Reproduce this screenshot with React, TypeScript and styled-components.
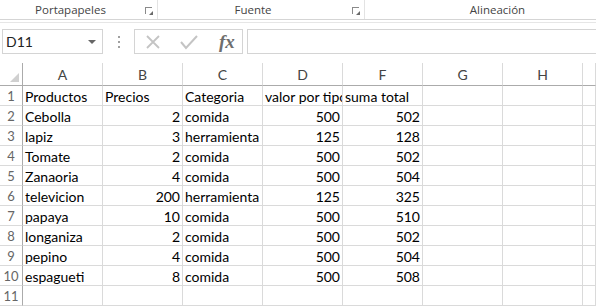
import { Fragment } from 'react';
import styled, { createGlobalStyle } from 'styled-components';

const GlobalStyle = createGlobalStyle`
    html, body {
        margin: 0;
        padding: 0;
        background: #ffffff;
    }
    body {
        font-family: Lato, "Liberation Sans", sans-serif;
        overflow: hidden;
    }
`;

const Wrap = styled.div`
    width: 596px;
    height: 306px;
    overflow: hidden;
    background: #ffffff;
`;

// ribbon group labels
const RibbonFooter = styled.div`
    display: flex;
    height: 19px;
    border-bottom: 1px solid #d5d5d5;
`;
const RibbonGroup = styled.div<{ $width: number; $launcher?: boolean }>`
    position: relative;
    flex: 0 0 ${(props) => props.$width}px;
    display: flex;
    justify-content: center;
    align-items: center;
    padding-right: ${(props) => (props.$launcher ? '16px' : '0')};
    border-right: 1px solid #e3e3e3;
    box-sizing: border-box;
    font-family: "Open Sans", sans-serif;
    font-size: 11.5px;
    color: #444444;
`;
const Launcher = styled.span`
    position: absolute;
    right: 5px;
    top: 7px;
    width: 7px;
    height: 7px;
    border-left: 1px solid #8a8a8a;
    border-top: 1px solid #8a8a8a;
    box-sizing: border-box;
    &::after {
        content: '';
        position: absolute;
        right: -1px;
        bottom: -1px;
        width: 0;
        height: 0;
        border-left: 4px solid transparent;
        border-bottom: 4px solid #6a6a6a;
    }
`;
const RibbonLine = styled.div`
    margin-top: 2px;
    height: 0;
    border-top: 1px solid #e6e6e6;
`;

// formula bar
const FormulaBar = styled.div`
    display: flex;
    align-items: stretch;
    height: 25px;
    margin-top: 6px;
    padding-left: 2px;
`;
const NameBox = styled.div`
    width: 101px;
    box-sizing: border-box;
    border: 1px solid #d4d4d4;
    display: flex;
    align-items: center;
    justify-content: space-between;
    padding: 0 6px 0 3px;
    font-size: 14px;
    color: #222222;
`;
const DropArrow = styled.span`
    width: 0;
    height: 0;
    border-left: 4px solid transparent;
    border-right: 4px solid transparent;
    border-top: 4px solid #666666;
`;
const Dots = styled.div`
    width: 31px;
    display: flex;
    flex-direction: column;
    justify-content: center;
    align-items: center;
    gap: 3px;
    span {
        width: 2px;
        height: 2px;
        background: #a0a0a0;
    }
`;
const ButtonBox = styled.div`
    width: 109px;
    box-sizing: border-box;
    border: 1px solid #d4d4d4;
    display: flex;
    align-items: center;
    padding-left: 10px;
    gap: 19px;
`;
const Fx = styled.span`
    font-family: "Liberation Serif", serif;
    font-style: italic;
    font-weight: bold;
    font-size: 19px;
    color: #6e6e6e;
    margin-left: 2px;
`;
const FormulaInput = styled.div`
    flex: 1;
    margin-left: 4px;
    border: 1px solid #d4d4d4;
    border-right: 0;
`;

// sheet
const Sheet = styled.div`
    margin-top: 9px;
    display: grid;
    grid-template-columns: 23px repeat(7, 80px) 1fr;
    grid-auto-rows: 20px;
    grid-template-rows: 23px;
`;
const Corner = styled.div`
    position: relative;
    border-right: 1px solid #ababab;
    border-bottom: 1px solid #ababab;
    &::after {
        content: '';
        position: absolute;
        right: 3px;
        bottom: 3px;
        width: 0;
        height: 0;
        border-left: 9px solid transparent;
        border-bottom: 9px solid #d0d0d0;
    }
`;
const ColHead = styled.div`
    display: flex;
    align-items: center;
    justify-content: center;
    border-right: 1px solid #dadada;
    border-bottom: 1px solid #ababab;
    font-size: 14px;
    color: #444444;
`;
const RowHead = styled.div`
    display: flex;
    align-items: center;
    justify-content: center;
    border-right: 1px solid #ababab;
    border-bottom: 1px solid #dadada;
    font-size: 13px;
    color: #666666;
`;
const Cell = styled.div<{ $num?: boolean }>`
    box-sizing: border-box;
    padding: 1px 2px 0 2px;
    border-right: 1px solid #dadada;
    border-bottom: 1px solid #dadada;
    font-size: 14px;
    line-height: 19px;
    color: #000000;
    white-space: nowrap;
    overflow: hidden;
    text-align: ${(props) => (props.$num ? 'right' : 'left')};
`;

const columns = ['A', 'B', 'C', 'D', 'F', 'G', 'H', ''];

const data: (string | number)[][] = [
    ['Productos', 'Precios', 'Categoria', 'valor por tipo', 'suma total'],
    ['Cebolla', 2, 'comida', 500, 502],
    ['lapiz', 3, 'herramienta', 125, 128],
    ['Tomate', 2, 'comida', 500, 502],
    ['Zanaoria', 4, 'comida', 500, 504],
    ['televicion', 200, 'herramienta', 125, 325],
    ['papaya', 10, 'comida', 500, 510],
    ['longaniza', 2, 'comida', 500, 502],
    ['pepino', 4, 'comida', 500, 504],
    ['espagueti', 8, 'comida', 500, 508],
    [],
];

const CancelIcon = () => (
    <svg width="16" height="16" viewBox="0 0 16 16">
        <path d="M2 2 L14 14 M14 2 L2 14" stroke="#c4c4c4" strokeWidth="1.8" fill="none" />
    </svg>
);
const EnterIcon = () => (
    <svg width="18" height="16" viewBox="0 0 18 16">
        <path d="M1 8 L6 14 L17 2" stroke="#c4c4c4" strokeWidth="2" fill="none" />
    </svg>
);

const App = () => {
    return (
        <>
            <GlobalStyle />
            <Wrap>
                <RibbonFooter>
                    <RibbonGroup $width={158} $launcher>Portapapeles<Launcher /></RibbonGroup>
                    <RibbonGroup $width={207} $launcher>Fuente<Launcher /></RibbonGroup>
                    <RibbonGroup $width={266}>Alineación</RibbonGroup>
                </RibbonFooter>
                <RibbonLine />
                <FormulaBar>
                    <NameBox>D11<DropArrow /></NameBox>
                    <Dots><span /><span /><span /></Dots>
                    <ButtonBox>
                        <CancelIcon />
                        <EnterIcon />
                        <Fx>fx</Fx>
                    </ButtonBox>
                    <FormulaInput />
                </FormulaBar>
                <Sheet>
                    <Corner />
                    {columns.map((c, i) => (
                        <ColHead key={i}>{c}</ColHead>
                    ))}
                    {data.map((row, r) => (
                        <Fragment key={r}>
                            <RowHead>{r + 1}</RowHead>
                            {columns.map((_, c) => {
                                const v = row[c];
                                return (
                                    <Cell key={c} $num={typeof v === 'number'}>
                                        {v}
                                    </Cell>
                                );
                            })}
                        </Fragment>
                    ))}
                </Sheet>
            </Wrap>
        </>
    );
};

export default App;
